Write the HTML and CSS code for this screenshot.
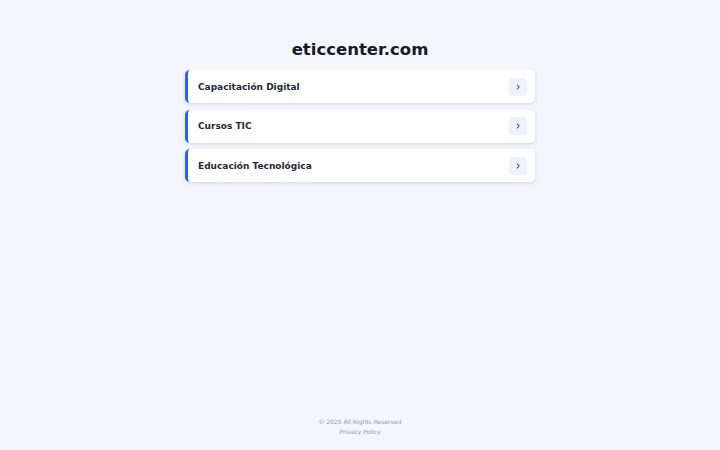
FILE: index.html
```html
<!DOCTYPE html>
<html lang="es">
<head>
<meta charset="utf-8">
<title>eticcenter.com</title>
<link rel="stylesheet" href="styles.css">
</head>
<body>
<main class="page">
  <h1 class="title">eticcenter.com</h1>
  <ul class="links">
    <li><a class="card" href="#"><span class="label">Capacitación Digital</span><span class="chev"><svg viewBox="0 0 10 10" width="8" height="8"><path d="M4 2.5 L6.5 5 L4 7.5" fill="none" stroke="#374151" stroke-width="1.3" stroke-linecap="round" stroke-linejoin="round"/></svg></span></a></li>
    <li><a class="card" href="#"><span class="label">Cursos TIC</span><span class="chev"><svg viewBox="0 0 10 10" width="8" height="8"><path d="M4 2.5 L6.5 5 L4 7.5" fill="none" stroke="#374151" stroke-width="1.3" stroke-linecap="round" stroke-linejoin="round"/></svg></span></a></li>
    <li><a class="card" href="#"><span class="label">Educación Tecnológica</span><span class="chev"><svg viewBox="0 0 10 10" width="8" height="8"><path d="M4 2.5 L6.5 5 L4 7.5" fill="none" stroke="#374151" stroke-width="1.3" stroke-linecap="round" stroke-linejoin="round"/></svg></span></a></li>
  </ul>
</main>
<footer class="footer">
  <div>© 2025 All Rights Reserved</div>
  <div><a href="#" class="policy">Privacy Policy</a></div>
</footer>
</body>
</html>
```
FILE: styles.css
```css
html, body { margin: 0; padding: 0; }
body {
  background: #f3f6fb;
  font-family: "DejaVu Sans", sans-serif;
  color: #111827;
  height: 450px;
  display: flex;
  flex-direction: column;
}
.page {
  width: 350px;
  margin: 0 auto;
  padding-top: 39px;
  flex: 1;
}
.title {
  margin: 0 0 9px;
  text-align: center;
  font-size: 16.5px;
  line-height: 22px;
  font-weight: bold;
  color: #141a29;
}
.links {
  list-style: none;
  margin: 0;
  padding: 0;
  display: flex;
  flex-direction: column;
  gap: 6.5px;
}
.card {
  display: flex;
  align-items: center;
  justify-content: space-between;
  height: 33px;
  box-sizing: border-box;
  padding: 0 8px 0 10px;
  background: #fff;
  border-left: 3px solid #2563eb;
  border-radius: 5px;
  box-shadow: 0 1px 3px rgba(15, 23, 42, 0.08), 0 2px 6px rgba(15, 23, 42, 0.05);
  text-decoration: none;
  color: #1f2937;
}
.label {
  font-size: 9px;
  font-weight: bold;
}
.chev {
  width: 18px;
  height: 18px;
  border-radius: 4px;
  background: #edf3fd;
  display: flex;
  align-items: center;
  justify-content: center;
}
.footer {
  text-align: center;
  font-size: 6px;
  line-height: 10px;
  color: #949aa4;
  padding-bottom: 13px;
}
.policy { color: #949aa4; text-decoration: none; }
```
